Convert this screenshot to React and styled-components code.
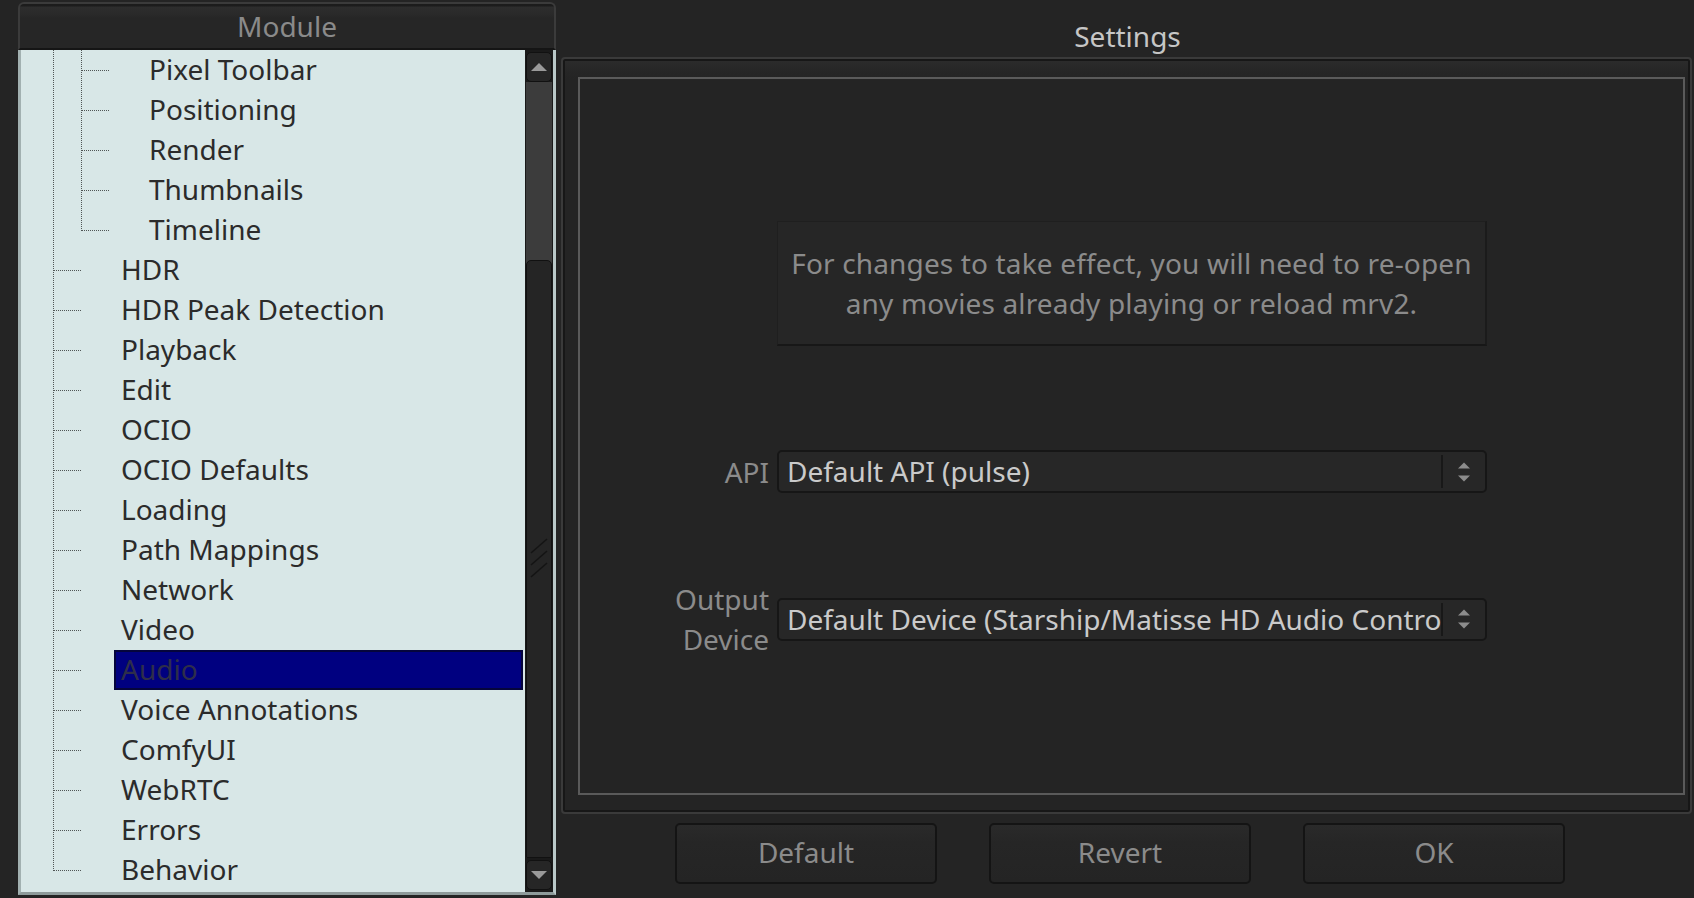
import React from "react";
import styled, { createGlobalStyle } from "styled-components";

const GlobalStyle = createGlobalStyle`
  html, body {
    margin: 0;
    padding: 0;
    background: #242424;
  }
  body {
    font-family: "Noto Sans", "Open Sans", "DejaVu Sans", sans-serif;
    overflow: hidden;
  }
`;

const modules = [
  { label: "Pixel Toolbar", depth: 2 },
  { label: "Positioning", depth: 2 },
  { label: "Render", depth: 2 },
  { label: "Thumbnails", depth: 2 },
  { label: "Timeline", depth: 2, last: true },
  { label: "HDR", depth: 1 },
  { label: "HDR Peak Detection", depth: 1 },
  { label: "Playback", depth: 1 },
  { label: "Edit", depth: 1 },
  { label: "OCIO", depth: 1 },
  { label: "OCIO Defaults", depth: 1 },
  { label: "Loading", depth: 1 },
  { label: "Path Mappings", depth: 1 },
  { label: "Network", depth: 1 },
  { label: "Video", depth: 1 },
  { label: "Audio", depth: 1, selected: true },
  { label: "Voice Annotations", depth: 1 },
  { label: "ComfyUI", depth: 1 },
  { label: "WebRTC", depth: 1 },
  { label: "Errors", depth: 1 },
  { label: "Behavior", depth: 1, last: true },
];

const Page = styled.div`
  display: flex;
  width: 1694px;
  height: 898px;
  background: #242424;
`;

/* ---------- left: module tree ---------- */

const LeftPane = styled.div`
  width: 538px;
  margin: 2px 0 0 18px;
  display: flex;
  flex-direction: column;
`;

const PaneHeader = styled.div`
  height: 44px;
  display: flex;
  align-items: center;
  justify-content: center;
  border: 2px solid #3b3b3b;
  border-bottom: 2px solid #151515;
  border-radius: 6px 6px 0 0;
  background: linear-gradient(#1c1c1c 0, #1c1c1c 2px, #2d2d2d 3px, #2a2a2a 10px, #262626 14px);
  color: #8a8a8a;
  font-size: 28px;
  line-height: 40px;
`;

const TreeBox = styled.div`
  display: flex;
  border-left: 3px solid #a2b1b1;
  border-right: 3px solid #b9c8c8;
  border-bottom: 3px solid #8e9b9b;
  background: #d8e7e7;
`;

const TreeList = styled.div`
  flex: 1;
  padding-bottom: 2px;
  display: flex;
  flex-direction: column;
`;

const TreeRow = styled.div`
  height: 40px;
  display: flex;
  align-items: stretch;
  padding-left: 32px;
`;

const Guide = styled.svg`
  width: 28px;
  height: 40px;
  flex: none;
  display: block;
`;

const TreeLabel = styled.div`
  flex: 1;
  margin: 0 2px 0 33px;
  padding: 0 0 2px 5px;
  font-size: 28px;
  line-height: 34px;
  white-space: nowrap;
  color: ${(p) => (p.$selected ? "#2e2e4a" : "#2b2b2b")};
  background: ${(p) => (p.$selected ? "#000080" : "transparent")};
  border: 2px solid ${(p) => (p.$selected ? "#05053c" : "transparent")};
`;

const ScrollBar = styled.div`
  width: 26px;
  padding: 2px 1px;
  background: #1a1a1a;
  display: flex;
  flex-direction: column;
  gap: 2px;
`;

const ScrollButton = styled.div`
  height: 30px;
  flex: none;
  box-sizing: border-box;
  border: 1px solid #111;
  border-radius: 5px;
  background: #262626;
  display: flex;
  align-items: center;
  justify-content: center;
`;

const ScrollTrack = styled.div`
  flex: 1;
  margin-top: -2px;
  background: #3c3c3c;
  display: flex;
  flex-direction: column;
`;

const ScrollThumb = styled.div`
  flex: 1;
  margin-top: ${(p) => p.$offset}px;
  border: 1px solid #111;
  border-radius: 5px 5px 0 0;
  background: #252525;
  display: flex;
  align-items: center;
  justify-content: center;
`;

/* ---------- right: settings ---------- */

const RightPane = styled.div`
  flex: 1;
  margin-left: 5px;
  display: flex;
  flex-direction: column;
`;

const Title = styled.div`
  height: 41px;
  padding-top: 16px;
  text-align: center;
  color: #c6c6c6;
  font-size: 28px;
  line-height: 40px;
`;

const GroupBox = styled.div`
  height: 718px;
  margin-right: 2px;
  padding: 18px 5px 17px 15px;
  border: 2px solid #3a3a3a;
  border-radius: 4px;
  box-shadow: inset 0 0 0 2px #171717;
  background: linear-gradient(#2c2c2c 0, #262626 12px, #242424 20px);
  display: flex;
`;

const Frame = styled.div`
  flex: 1;
  border: 2px solid #5a5a5a;
  background: #242424;
  padding-top: 142px;
  display: flex;
  flex-direction: column;
`;

const FieldRow = styled.div`
  display: grid;
  grid-template-columns: 189px 710px;
  column-gap: 8px;
  align-items: center;
  margin-top: ${(p) => p.$top || 0}px;
`;

const FieldLabel = styled.div`
  text-align: right;
  color: #8b8b8b;
  font-size: 28px;
  line-height: 40px;
`;

const InfoBox = styled.div`
  height: 122px;
  border: 1px solid #1f1f1f;
  border-bottom: 2px solid #171717;
  border-right: 2px solid #1b1b1b;
  background: #262626;
  display: flex;
  align-items: center;
  justify-content: center;
  text-align: center;
  color: #8b8b8b;
  font-size: 28px;
  line-height: 40px;
  letter-spacing: 0.15px;
`;

const Choice = styled.div`
  height: 39px;
  display: flex;
  border: 2px solid #161616;
  border-radius: 5px;
  background: #272727;
`;

const ChoiceValue = styled.div`
  flex: 1;
  min-width: 0;
  padding-left: 8px;
  overflow: hidden;
  white-space: nowrap;
  color: #cacaca;
  font-size: 28px;
  line-height: 39px;
`;

const Spinner = styled.div`
  width: 42px;
  margin: 3px 0;
  border-left: 2px solid #181818;
  display: flex;
  align-items: center;
  justify-content: center;
`;

const ButtonBar = styled.div`
  display: flex;
  gap: 52px;
  padding: 9px 0 0 114px;
`;

const Button = styled.button`
  width: 262px;
  height: 61px;
  border: 2px solid #141414;
  border-radius: 5px;
  background: linear-gradient(#2a2a2a, #262626 30%, #242424);
  color: #8b8b8b;
  font-family: inherit;
  font-size: 28px;
  padding: 0 0 4px;
`;

const TreeGuide = ({ mode }) => (
  <Guide viewBox="0 0 28 40">
    <line
      x1="0.5"
      y1="0"
      x2="0.5"
      y2={mode === "end" ? 21 : 40}
      stroke="#4f5555"
      strokeDasharray="1 1"
    />
    {mode !== "pass" && (
      <line x1="1" y1="20.5" x2="28" y2="20.5" stroke="#4f5555" strokeDasharray="1 1" />
    )}
  </Guide>
);

const Arrows = () => (
  <svg width="14" height="24" viewBox="0 0 14 24">
    <polygon points="1,8.5 13,8.5 7,2.5" fill="#8c8c8c" />
    <polygon points="1,15.5 13,15.5 7,21.5" fill="#8c8c8c" />
  </svg>
);

const Select = ({ value }) => (
  <Choice>
    <ChoiceValue>{value}</ChoiceValue>
    <Spinner>
      <Arrows />
    </Spinner>
  </Choice>
);

const ModuleTree = () => (
  <TreeBox>
    <TreeList>
      {modules.map((m) => (
        <TreeRow key={m.label}>
          {m.depth === 2 ? (
            <>
              <TreeGuide mode="pass" />
              <TreeGuide mode={m.last ? "end" : "tee"} />
            </>
          ) : (
            <TreeGuide mode={m.last ? "end" : "tee"} />
          )}
          <TreeLabel $selected={m.selected}>{m.label}</TreeLabel>
        </TreeRow>
      ))}
    </TreeList>
    <ScrollBar>
      <ScrollButton>
        <svg width="16" height="8" viewBox="0 0 16 8">
          <polygon points="0,8 16,8 8,0" fill="#9a9a9a" />
        </svg>
      </ScrollButton>
      <ScrollTrack>
        <ScrollThumb $offset={178}>
          <svg width="18" height="42" viewBox="0 0 18 42">
            <g stroke="#141414" strokeWidth="1.5">
              <line x1="1" y1="15" x2="17" y2="1" />
              <line x1="1" y1="27" x2="17" y2="13" />
              <line x1="1" y1="39" x2="17" y2="25" />
            </g>
          </svg>
        </ScrollThumb>
      </ScrollTrack>
      <ScrollButton>
        <svg width="16" height="8" viewBox="0 0 16 8">
          <polygon points="0,0 16,0 8,8" fill="#9a9a9a" />
        </svg>
      </ScrollButton>
    </ScrollBar>
  </TreeBox>
);

export default function App() {
  return (
    <Page>
      <GlobalStyle />
      <LeftPane>
        <PaneHeader>Module</PaneHeader>
        <ModuleTree />
      </LeftPane>
      <RightPane>
        <Title>Settings</Title>
        <GroupBox>
          <Frame>
            <FieldRow>
              <span />
              <InfoBox>
                For changes to take effect, you will need to re-open
                <br />
                any movies already playing or reload mrv2.
              </InfoBox>
            </FieldRow>
            <FieldRow $top={104}>
              <FieldLabel>API</FieldLabel>
              <Select value="Default API (pulse)" />
            </FieldRow>
            <FieldRow $top={86}>
              <FieldLabel>
                Output
                <br />
                Device
              </FieldLabel>
              <Select value="Default Device (Starship/Matisse HD Audio Controller)" />
            </FieldRow>
          </Frame>
        </GroupBox>
        <ButtonBar>
          <Button>Default</Button>
          <Button>Revert</Button>
          <Button>OK</Button>
        </ButtonBar>
      </RightPane>
    </Page>
  );
}
